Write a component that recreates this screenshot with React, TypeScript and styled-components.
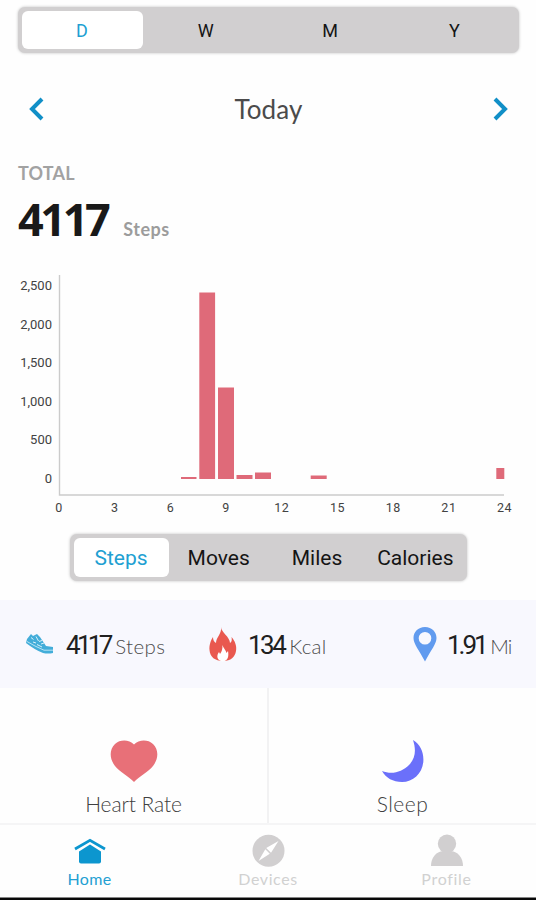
import React from "react";
import styled, { createGlobalStyle } from "styled-components";

const Global = createGlobalStyle`
  *{box-sizing:border-box}
  body{margin:0;background:#fff;font-family:Roboto,sans-serif;overflow:hidden}
  svg{display:block;flex:none}
`;
const Page = styled.main`width:536px;height:900px;overflow:hidden;display:flex;flex-direction:column;background:#fefefe;`;
const Segments = styled.div<{ $w: number; $top: number; $h: number; $first: number }>`
  width:${p => p.$w}px;height:${p => p.$h}px;margin:${p => p.$top}px auto 0;padding:4px 3px 4px 4px;
  display:grid;grid-template-columns:${p => p.$first}px repeat(3,1fr);column-gap:2px;flex:none;
  background:#d1cfd0;border-radius:7px;box-shadow:0 0 3px rgba(0,0,0,.25);
`;
const Segment = styled.button<{ $on?: boolean; $size: number }>`
  border:0;padding:0;border-radius:6px;background:${p => (p.$on ? "#fff" : "transparent")};
  color:${p => (p.$on ? "#219fd2" : "#151515")};font:400 ${p => p.$size}px Roboto,sans-serif;white-space:nowrap;
`;
const DateBar = styled.div`height:48px;margin-top:32px;padding:0 27px 0 28px;display:flex;align-items:center;justify-content:space-between;flex:none;`;
const Label = styled.span<{ $size: number; $color: string; $weight?: number; $ls?: number; $font?: string }>`
  font-family:${p => p.$font ?? "Lato"},sans-serif;font-size:${p => p.$size}px;font-weight:${p => p.$weight ?? 400};
  color:${p => p.$color};letter-spacing:${p => p.$ls ?? 0}px;line-height:1;white-space:nowrap;
`;
const Summary = styled.section`height:109px;padding:31px 18px 0;flex:none;display:flex;flex-direction:column;`;
const TotalRow = styled.div`display:flex;align-items:baseline;gap:16px;margin-top:14px;`;
const Chart = styled.section`height:278px;flex:none;`;
const Stats = styled.section`height:88px;margin-top:19px;background:#f8f8fe;flex:none;display:grid;grid-template-columns:209px 204px 1fr;align-items:center;`;
const Stat = styled.div<{ $gap: number; $pad?: number }>`display:flex;align-items:center;gap:${p => p.$gap}px;padding-left:${p => p.$pad ?? 0}px;`;
const StatText = styled.div<{ $gap: number }>`display:flex;align-items:baseline;gap:${p => p.$gap}px;padding-top:2px;`;
const Cards = styled.section`height:137px;flex:none;display:grid;grid-template-columns:269px 267px;border-bottom:2px solid #f5f5f6;`;
const Card = styled.div`display:flex;flex-direction:column;align-items:center;padding-top:52px;gap:10px;&:first-child{border-right:2px solid #f2f2f3;}`;
const Nav = styled.nav`height:72px;flex:none;display:grid;grid-template-columns:179px 178px 179px;`;
const NavItem = styled.div`display:flex;flex-direction:column;align-items:center;padding-top:9px;gap:4px;`;
const Base = styled.div`height:3px;flex:none;background:#080808;border-top:1px solid #858585;`;

const Chevron = ({ right }: { right?: boolean }) => (
  <svg width="18" height="26" viewBox="0 0 18 26">
    <path d={right ? "M4 3 L14 13 L4 23" : "M14 3 L4 13 L14 23"} fill="none" stroke="#118fc7" strokeWidth="4" />
  </svg>
);

const yTicks = ["2,500", "2,000", "1,500", "1,000", "500", "0"];
const bars = [
  { x: 181, y: 477, w: 15.5 }, { x: 199.3, y: 292.5, w: 15.8 }, { x: 218, y: 387.5, w: 16 },
  { x: 236.5, y: 475, w: 16 }, { x: 255, y: 472.5, w: 16 }, { x: 310.7, y: 475.5, w: 16 }, { x: 496.3, y: 468, w: 8 },
];
const StepsChart = () => (
  <svg width="536" height="278" viewBox="0 242 536 278" fontFamily="Roboto, sans-serif" fill="#424242">
    <path d="M59.5 275 V495 H504" fill="none" stroke="#cbcbcb" strokeWidth="1.4" />
    {yTicks.map((t, i) => <text key={t} x="52" y={290 + i * 38.6} fontSize="13" textAnchor="end">{t}</text>)}
    {bars.map(b => <rect key={b.x} x={b.x} y={b.y} width={b.w} height={479 - b.y} fill="#df6a79" />)}
    {[0, 3, 6, 9, 12, 15, 18, 21, 24].map((t, i) => (
      <text key={t} x={59 + i * 55.7} y="512" fontSize="12.5" letterSpacing=".5" textAnchor="middle">{t}</text>
    ))}
  </svg>
);

const Shoe = () => (
  <svg width="28" height="22" viewBox="0 0 28 22">
    <path d="M1 6 L5 1 L7 3 L11 1 L14 4 L18 10 L20 13 L27 14 V20 Q22 21 17 20 Q9 17 0 10Z" fill="#43add9" />
    <path d="M1 8.5 L9 13 L18 17.2 H27" fill="none" stroke="#c4e9f6" strokeWidth=".9" />
    <path d="M5 4.5 L7.5 6.5 M10 3.5 L12.5 8 M7 9 L10 10 M11 11.5 L16 14 M13 8.5 L16 7.5 M15 11 L18 10" fill="none" stroke="#d8f1fa" strokeWidth="1" />
  </svg>
);
const Flame = () => (
  <svg width="28" height="35" viewBox="0 0 28 35">
    <path d="M12 0 C12 5 21 10 21 16 C23 15 23 12 22.5 10 C26 14 28 19 27 24 C26 30 22 34 14 34 C6 34 1 30 0.5 23 C0 18 2 13 4 10 C4 13 5 15 7 16 C7 10 13 7 12 0Z" fill="#e9584f" />
    <path d="M13.5 18 C14 21 17 23 17.5 26 L19 24 C20 29 19 34 14 34.5 C8 34 7 29 10 25 L11 27 C13 24 13.5 22 13.5 18Z" fill="#fff" />
  </svg>
);
const Pin = () => (
  <svg width="24" height="35" viewBox="0 0 24 35">
    <path fillRule="evenodd" d="M12 0 C5 0 .5 5 .5 11 C.5 17 6 23 12 34.5 C18 23 23.5 17 23.5 11 C23.5 5 19 0 12 0Z M12 5 A6.3 6.3 0 1 1 12 17.6 A6.3 6.3 0 1 1 12 5Z" fill="#619bef" />
  </svg>
);
const Heart = () => (
  <svg width="48" height="43" viewBox="0 0 48 43">
    <path d="M24 4.5 C19 -.7 10 -.7 5 4 C-1 10 -.5 19 5 26 C9 31 19 37 24 42 C29 37 39 31 43 26 C48.5 19 49 10 43 4 C38 -.7 29 -.7 24 4.5Z" fill="#e87078" />
  </svg>
);
const Moon = () => (
  <svg width="42" height="43" viewBox="0 0 42 43">
    <path d="M31 0 C39 5 42 13 41.3 22 C40 34 31 42 20 42 C11 42 4 38 0 31 C10 35 20 32 27 25 C34 18 34 9 31 0Z" fill="#6b70fa" />
  </svg>
);
const House = () => (
  <svg width="32" height="33" viewBox="0 -1 32 33">
    <path d="M1 14 L16 5.3 L31 14" fill="none" stroke="#0c96cf" strokeWidth="2.8" />
    <path d="M5 16.5 L16 9.6 L27 16.5 V26.5 Q27 28.5 25 28.5 H7 Q5 28.5 5 26.5Z" fill="#0c96cf" />
  </svg>
);
const Compass = () => (
  <svg width="33" height="33" viewBox="0 0 33 33">
    <circle cx="16.5" cy="16.8" r="16" fill="#d1cfd0" />
    <path d="M26.5 7 L19 18.8 L14.2 14Z M13.3 15.2 L17.8 19.7 L6.5 27Z" fill="#fff" />
  </svg>
);
const Person = () => (
  <svg width="32" height="33" viewBox="0 0 32 33">
    <circle cx="16" cy="9.8" r="9.2" fill="#d1cfd0" />
    <path d="M0 32 C0 24 5 17.5 12 17 H20 C27 17.5 32 24 32 32Z" fill="#d1cfd0" />
  </svg>
);

const Value = ({ value, unit, ls, gap, unitLs = 0 }: { value: string; unit: string; ls: number; gap: number; unitLs?: number }) => (
  <StatText $gap={gap}>
    <Label $size={26} $color="#202020" $font="Roboto" $ls={ls}>{value}</Label>
    <Label $size={20.5} $color="#4c4c4c" $weight={300} $ls={unitLs}>{unit}</Label>
  </StatText>
);

export default function App() {
  return (
    <><Global /><Page>
      <Segments $w={501} $h={46} $top={7} $first={121}>
        {["D", "W", "M", "Y"].map((t, i) => <Segment key={t} $on={i === 0} $size={18}>{t}</Segment>)}
      </Segments>
      <DateBar><Chevron /><Label $size={26} $color="#4b4b4b" $ls={.1}>Today</Label><Chevron right /></DateBar>
      <Summary>
        <Label $size={18} $color="#a2a2a2" $weight={700} $ls={.2}>TOTAL</Label>
        <TotalRow><Label $size={45} $color="#191919" $weight={700} $ls={-3.4} $font="Open Sans">4117</Label><Label $size={18} $color="#9c9c9c" $weight={700} $ls={.5}>Steps</Label></TotalRow>
      </Summary>
      <Chart><StepsChart /></Chart>
      <Segments $w={397} $h={47} $top={14} $first={95}>
        {["Steps", "Moves", "Miles", "Calories"].map((t, i) => <Segment key={t} $on={i === 0} $size={21}>{t}</Segment>)}
      </Segments>
      <Stats>
        <Stat $gap={12} $pad={26}><Shoe /><Value value="4117" unit="Steps" ls={-3.7} gap={5.5} unitLs={.4} /></Stat>
        <Stat $gap={11}><Flame /><Value value="134" unit="Kcal" ls={-2.5} gap={5} unitLs={.2} /></Stat>
        <Stat $gap={10}><Pin /><Value value="1.91" unit="Mi" ls={-3} gap={4.5} unitLs={-1} /></Stat>
      </Stats>
      <Cards>
        <Card><Heart /><Label $size={21} $color="#404040" $weight={300} $ls={-.1}>Heart Rate</Label></Card>
        <Card><Moon /><Label $size={21} $color="#404040" $weight={300} $ls={.5}>Sleep</Label></Card>
      </Cards>
      <Nav>
        <NavItem><House /><Label $size={16} $color="#24a0d2" $ls={.4}>Home</Label></NavItem>
        <NavItem><Compass /><Label $size={16} $color="#d1d1d1" $ls={.6}>Devices</Label></NavItem>
        <NavItem><Person /><Label $size={16} $color="#d1d1d1" $ls={.7}>Profile</Label></NavItem>
      </Nav>
      <Base />
    </Page></>
  );
}
